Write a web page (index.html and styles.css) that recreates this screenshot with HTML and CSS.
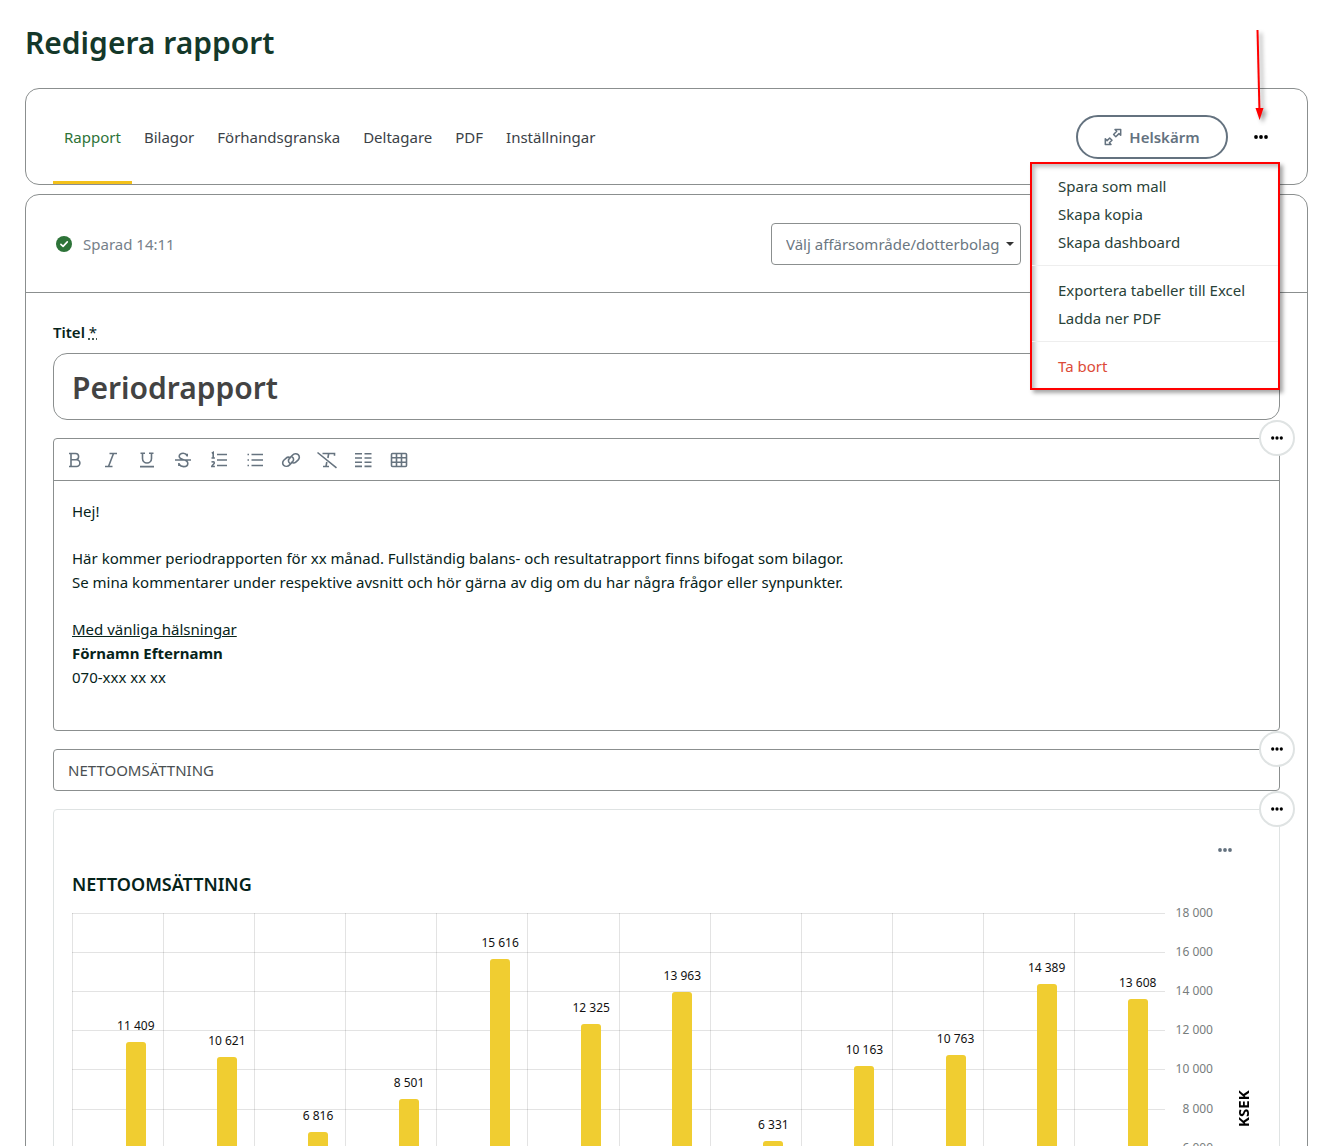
FILE: index.html
```
<!DOCTYPE html>
<html lang="sv">
<head>
<meta charset="utf-8">
<meta name="viewport" content="width=device-width, initial-scale=1">
<title>Redigera rapport</title>
<link rel="stylesheet" href="styles.css">
</head>
<body>
<svg class="sprite" aria-hidden="true">
  <symbol id="dots" viewBox="0 0 14 4"><circle cx="2" cy="2" r="1.9"/><circle cx="7" cy="2" r="1.9"/><circle cx="12" cy="2" r="1.9"/></symbol>
</svg>
<main class="page">
  <h1 class="page-title">Redigera rapport</h1>

  <header class="card topbar">
    <nav class="tabs">
      <a class="tab tab-active" href="#rapport">Rapport</a>
      <a class="tab" href="#bilagor">Bilagor</a>
      <a class="tab" href="#forhandsgranska">Förhandsgranska</a>
      <a class="tab" href="#deltagare">Deltagare</a>
      <a class="tab" href="#pdf">PDF</a>
      <a class="tab" href="#installningar">Inställningar</a>
    </nav>
    <div class="actions">
      <button class="fullscreen" type="button">
        <svg width="18" height="18" viewBox="0 0 18 18" fill="none" stroke="currentColor" stroke-width="1.5" stroke-linejoin="round"><path d="M11 1.500h5.700v5.700l-1.700-1.600-3.200 3.100-2.200-2.200 3.100-3.200z"/><path d="M1.300 10.800v5.700h5.700l-1.600-1.700 2.600-2.500-2.300-2.300-2.600 2.600z"/></svg>
        Helskärm
      </button>
      <div class="more">
        <button class="more-button" type="button" aria-label="Fler val"><svg width="14" height="4"><use href="#dots"/></svg></button>
        <svg class="arrow" width="20" height="96" viewBox="0 0 20 96"><path d="M7.500 1 9.500 83" stroke="#f00" stroke-width="2"/><path d="M5.500 79h8L9.600 91z" fill="#f00"/></svg>
        <div class="menu">
          <button type="button">Spara som mall</button>
          <button type="button">Skapa kopia</button>
          <button type="button">Skapa dashboard</button>
          <hr>
          <button type="button">Exportera tabeller till Excel</button>
          <button type="button">Ladda ner PDF</button>
          <hr>
          <button class="danger" type="button">Ta bort</button>
        </div>
      </div>
    </div>
  </header>

  <section class="card report">
    <div class="report-head">
      <p class="status">
        <svg width="16" height="16" viewBox="0 0 16 16"><circle cx="8" cy="8" r="8" fill="#2d7338"/><path d="M4.900 8.300 7.100 10.400 11.300 5.900" fill="none" stroke="#fff" stroke-width="1.6" stroke-linecap="round" stroke-linejoin="round"/></svg>
        Sparad 14:11
      </p>
      <div class="select-wrap">
        <select class="select" aria-label="Affärsområde/dotterbolag"><option>Välj affärsområde/dotterbolag</option></select>
      </div>
    </div>

    <div class="report-body">
      <div class="field">
        <label for="title">Titel <abbr title="obligatoriskt">*</abbr></label>
        <input class="title-input" id="title" type="text" value="Periodrapport">
      </div>

      <div class="block editor">
        <button class="block-more" type="button" aria-label="Blockval"><svg width="12" height="4"><use href="#dots"/></svg></button>
        <div class="toolbar">
          <button type="button" aria-label="Fet"><svg viewBox="0 0 18 18"><path d="M3 2.500h6.500a3.100 3.100 0 0 1 0 6.200H5M5 2.500v13M3 15.500h7.500a3.400 3.400 0 0 0 0-6.800"/></svg></button>
          <button type="button" aria-label="Kursiv"><svg viewBox="0 0 18 18"><path d="M7.500 2.500H15M3 15.500h7.500M11.500 2.500l-5 13"/></svg></button>
          <button type="button" aria-label="Understruken"><svg viewBox="0 0 18 18"><path d="M2.500 2.200h4.500M11 2.200h4.500M4.500 2.200v5.300a4.500 4.500 0 0 0 9 0V2.200M2 15.600h14"/></svg></button>
          <button type="button" aria-label="Genomstruken"><svg viewBox="0 0 18 18"><path d="M13.200 5.500V2.800M13 4.500C12.200 3 10.900 2.300 9.200 2.300c-2.400 0-4 1.200-4 3 0 2.300 2.600 2.900 4.600 3.500 2.300.7 4 1.500 4 3.600 0 1.900-1.700 3.200-4.200 3.200-2 0-3.500-.8-4.500-2.300M4.900 12v3M1 9h16"/></svg></button>
          <button type="button" aria-label="Numrerad lista"><svg viewBox="0 0 18 18"><path d="M7 3.500h10M7 9h10M7 14.500h10M1.800 2.300l1.400-.8V7M1.500 7h3.400M1.700 11.400c.5-1 2.700-.9 2.600.5 0 1-2.500 2.700-2.500 3.600h3.100"/></svg></button>
          <button type="button" aria-label="Punktlista"><svg viewBox="0 0 18 18"><path d="M5.500 3.500H17M5.500 9H17M5.500 14.500H17M1.500 3.500H3M1.500 9H3M1.500 14.500H3"/></svg></button>
          <button type="button" aria-label="Länk"><svg class="wide" viewBox="0 0 20 18"><path d="M8.900 12.300c-1.800-1.300-1.900-3.300-.5-4.900l3-3.200c1.700-1.700 4.300-1.800 5.800-.5 1.500 1.400 1.500 3.600 0 5.200l-2.100 1.900c-1.700 1.600-3.900 1.500-5 0M11.100 5.800c1.800 1.300 1.900 3.300.5 4.900l-3 3.200c-1.700 1.700-4.300 1.800-5.800.5-1.500-1.400-1.500-3.600 0-5.200l2.100-1.900c1.700-1.600 3.900-1.500 5 0"/></svg></button>
          <button type="button" aria-label="Rensa formatering"><svg class="wide" viewBox="0 0 20 18"><path d="M5.500 2.500h12v2.300M11.700 2.500 10.900 7M9.800 11l-.8 4.500M6 15.500h6M.5 1.500l19 15.300"/></svg></button>
          <button type="button" aria-label="Kolumner"><svg viewBox="0 0 18 18"><path d="M1 2.800H8M1 7H8M1 11.200H8M1 15.400H8M10.500 2.800H17.500M10.500 7H17.500M10.500 11.200H17.500M10.500 15.400H17.500"/></svg></button>
          <button type="button" aria-label="Tabell"><svg viewBox="0 0 18 18"><rect x="1.500" y="2.500" width="15" height="13" rx="1"/><path d="M1.500 6.800h15M1.500 11.200h15M6.500 2.500v13M11.500 2.500v13"/></svg></button>
        </div>
        <div class="editor-text" contenteditable="true" spellcheck="false">
          <p>Hej!</p>
          <p>Här kommer periodrapporten för xx månad. Fullständig balans- och resultatrapport finns bifogat som bilagor.<br>Se mina kommentarer under respektive avsnitt och hör gärna av dig om du har några frågor eller synpunkter.</p>
          <p><u>Med vänliga hälsningar</u><br><strong>Förnamn Efternamn</strong><br>070-xxx xx xx</p>
        </div>
      </div>

      <div class="block">
        <button class="block-more" type="button" aria-label="Blockval"><svg width="12" height="4"><use href="#dots"/></svg></button>
        <input class="text-input" type="text" aria-label="Rubrik" value="NETTOOMSÄTTNING">
      </div>

      <div class="block chart-card">
        <button class="block-more" type="button" aria-label="Blockval"><svg width="12" height="4"><use href="#dots"/></svg></button>
        <div class="chart-tools"><button type="button" aria-label="Diagramval"><svg width="14" height="4"><use href="#dots"/></svg></button></div>
        <h2 class="chart-title">NETTOOMSÄTTNING</h2>
        <div class="chart">
          <div class="rows"><i></i><i></i><i></i><i></i><i></i><i></i><i></i><i></i><i></i></div>
          <div class="bars">
            <div class="col"><span>11 409</span><b style="height:63.4%"></b></div>
            <div class="col"><span>10 621</span><b style="height:59%"></b></div>
            <div class="col"><span>6 816</span><b style="height:37.9%"></b></div>
            <div class="col"><span>8 501</span><b style="height:47.2%"></b></div>
            <div class="col"><span>15 616</span><b style="height:86.8%"></b></div>
            <div class="col"><span>12 325</span><b style="height:68.5%"></b></div>
            <div class="col"><span>13 963</span><b style="height:77.6%"></b></div>
            <div class="col"><span>6 331</span><b style="height:35.2%"></b></div>
            <div class="col"><span>10 163</span><b style="height:56.5%"></b></div>
            <div class="col"><span>10 763</span><b style="height:59.8%"></b></div>
            <div class="col"><span>14 389</span><b style="height:79.9%"></b></div>
            <div class="col"><span>13 608</span><b style="height:75.6%"></b></div>
          </div>
          <div class="axis"><span>18 000</span><span>16 000</span><span>14 000</span><span>12 000</span><span>10 000</span><span>8 000</span><span>6 000</span><span>4 000</span><span>2 000</span></div>
          <div class="unit">KSEK</div>
        </div>
      </div>
    </div>
  </section>
</main>
</body>
</html>
```
FILE: styles.css
```
:root {
  --line: #8b8f8f;
  --soft-line: #dfe3e3;
  --ink: #06231a;
  --slate: #64727f;
}

* { box-sizing: border-box; }

html { scrollbar-width: none; }

body {
  margin: 0;
  background: #fff;
  color: var(--ink);
  font: 15px/24px "Noto Sans", sans-serif;
}

button, input, select { font: inherit; color: inherit; }
button { padding: 0; border: 0; background: none; cursor: pointer; }
p, h1, h2 { margin: 0; }
svg { display: block; flex: none; }
.sprite { position: absolute; width: 0; height: 0; }
use { fill: currentColor; }

.page { padding: 23px 27px 27px 25px; }

.page-title {
  margin-bottom: 25px;
  color: #14382a;
  font-size: 30px;
  font-weight: 600;
  line-height: 40px;
}

.card { border: 1px solid var(--line); border-radius: 14px; }

/* Tabs and page actions */
.topbar {
  display: flex;
  justify-content: space-between;
  height: 97px;
  margin-bottom: 9px;
  padding: 0 27px;
}

.tabs { display: flex; gap: 1px; }

.tab {
  display: flex;
  align-items: center;
  padding: 3px 11px 0;
  border-bottom: 3px solid transparent;
  color: #3b4247;
  text-decoration: none;
}

.tab-active { border-color: #f3c11b; color: #2d7338; }

.actions { display: flex; align-items: center; gap: 13px; }

.fullscreen {
  display: flex;
  align-items: center;
  justify-content: center;
  gap: 7px;
  width: 152px;
  height: 44px;
  border: 2px solid var(--slate);
  border-radius: 22px;
  color: var(--slate);
  font-weight: 600;
}

.more { position: relative; }

.more-button {
  display: grid;
  place-items: center;
  width: 39px;
  height: 44px;
  color: #000;
}

.arrow {
  position: absolute;
  right: 10px;
  bottom: 34px;
  filter: drop-shadow(3px 3px 2px rgba(0, 0, 0, .4));
}

.menu {
  position: absolute;
  z-index: 2;
  top: 47px;
  right: 0;
  width: 250px;
  padding: 8px 0;
  border: 2px solid #f00;
  background: #fff;
  box-shadow: 3px 3px 4px rgba(0, 0, 0, .35), inset 3px 3px 4px rgba(0, 0, 0, .25);
}

.menu button {
  display: block;
  width: 100%;
  padding: 0 26px;
  color: #294238;
  line-height: 28px;
  text-align: left;
}

.menu .danger { color: #dc4a38; }

.menu hr {
  height: 1px;
  margin: 9px 0 10px;
  border: 0;
  background: #eee;
}

/* Report */
.report-head {
  display: flex;
  align-items: center;
  justify-content: space-between;
  height: 98px;
  padding: 0 286px 0 30px;
  border-bottom: 1px solid var(--line);
}

.status { display: flex; align-items: center; gap: 11px; color: #76818a; }

.select-wrap { position: relative; }

.select-wrap::after {
  content: "";
  position: absolute;
  top: 19px;
  right: 7px;
  border: 4px solid transparent;
  border-top-color: #333;
  border-bottom: 0;
  pointer-events: none;
}

.select {
  width: 250px;
  height: 42px;
  padding: 0 14px;
  border: 1px solid var(--line);
  border-radius: 4px;
  appearance: none;
  background: #fff;
  color: #6b7781;
}

.report-body {
  display: flex;
  flex-direction: column;
  gap: 18px;
  padding: 27px;
}

.field { display: flex; flex-direction: column; gap: 9px; }
.field label { font-weight: 600; }
.field abbr { font-weight: 400; text-decoration: underline dotted; }

.title-input {
  width: 100%;
  height: 67px;
  padding: 2px 18px 0;
  border: 1px solid var(--line);
  border-radius: 14px;
  color: #434343;
  font-size: 30px;
  font-weight: 600;
}

.block { position: relative; border: 1px solid var(--line); border-radius: 4px; }

.block-more {
  position: absolute;
  top: -19px;
  right: -16px;
  display: grid;
  place-items: center;
  width: 36px;
  height: 36px;
  border: 2px solid var(--soft-line);
  border-radius: 50%;
  background: #fff;
  color: #000;
}

.toolbar {
  display: flex;
  height: 42px;
  padding: 0 3px;
  border-bottom: 1px solid var(--line);
}

.toolbar button { display: grid; place-items: center; width: 36px; }

.toolbar svg {
  width: 18px;
  height: 18px;
  fill: none;
  stroke: #66737f;
  stroke-width: 1.6;
}

.toolbar .wide { width: 20px; }

.editor-text {
  display: flex;
  flex-direction: column;
  gap: 23px;
  min-height: 249px;
  padding: 18px;
  outline: 0;
}

.text-input {
  display: block;
  width: 100%;
  height: 40px;
  padding: 0 14px;
  border: 0;
  background: none;
  color: #4a4f52;
}

/* Chart */
.chart-card { padding: 18px; border-color: var(--soft-line); }

.chart-tools {
  display: flex;
  justify-content: flex-end;
  height: 44px;
  padding-right: 24px;
}

.chart-tools button {
  display: grid;
  place-items: center;
  width: 24px;
  color: var(--slate);
}

.chart-title { margin-bottom: 17px; font-size: 18px; font-weight: 600; line-height: 24px; }

.chart {
  display: grid;
  grid-template-columns: 1fr 48px 48px;
  grid-template-rows: 352px 40px;
  font-size: 12px;
  line-height: 16px;
}

.rows, .bars { grid-area: 1 / 1; display: grid; }
.rows i { border-top: 1px solid rgba(0, 0, 0, .11); }

.bars { grid-template-columns: repeat(12, 1fr); }

.col {
  display: flex;
  flex-direction: column;
  align-items: center;
  justify-content: flex-end;
  gap: 8px;
  height: 352px;
  padding-left: 39%;
  border-left: 1px solid rgba(0, 0, 0, .11);
  color: #111;
}

.col b {
  flex: none;
  width: 20px;
  border-radius: 3px 3px 0 0;
  background: #f0cd31;
}

.axis {
  grid-area: 1 / 2;
  display: grid;
  margin-top: -8px;
  margin-bottom: 8px;
  color: #777d7d;
  text-align: right;
}

.unit {
  grid-area: 1 / 3 / 3 / 4;
  display: flex;
  align-items: center;
  justify-content: center;
  padding-right: 12px;
  transform: rotate(180deg);
  writing-mode: vertical-rl;
  color: #000;
  font-size: 15px;
  font-weight: 700;
}
```
